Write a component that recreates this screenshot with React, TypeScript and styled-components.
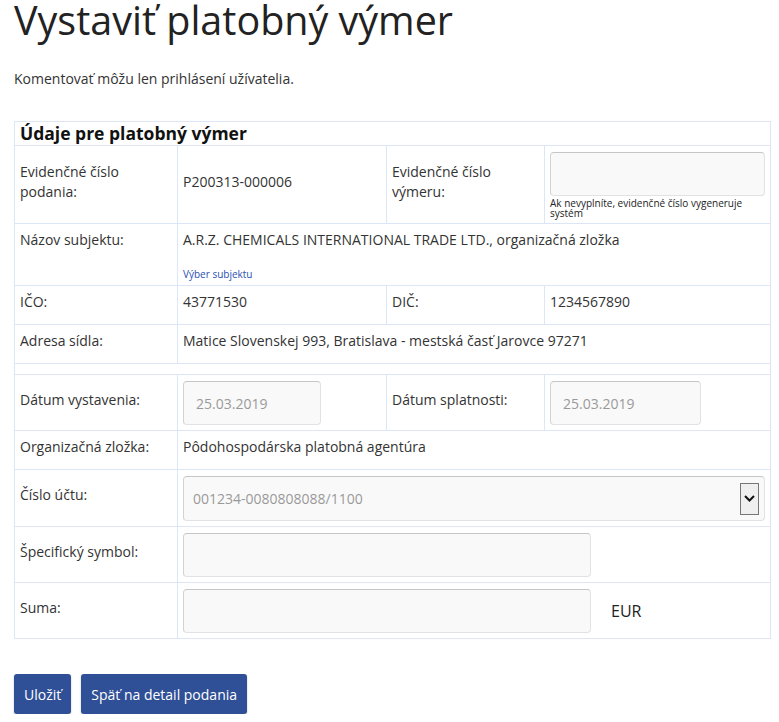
import React from 'react'
import styled, { createGlobalStyle } from 'styled-components'

const GlobalStyle = createGlobalStyle`
	body {
		margin: 0;
		background: #fff;
		font-family: 'Open Sans', 'Liberation Sans', sans-serif;
		font-size: 14px;
		color: #333;
	}
`

const Page = styled.div`
	padding: 0 9px 0 14px;
`

const Title = styled.h1`
	margin: 0;
	font-size: 39.5px;
	line-height: 40px;
	font-weight: 400;
	color: #222;
`

const Note = styled.p`
	margin: 29px 0 32px;
	line-height: 20px;
`

const Table = styled.table`
	width: 756px;
	border-collapse: collapse;
	table-layout: fixed;
`

const HeadCell = styled.th`
	border: 1px solid #dde6f7;
	padding: 0 5px;
	height: 23px;
	line-height: 23px;
	font-size: 17.5px;
	font-weight: 700;
	color: #111;
	text-align: left;
`

const Cell = styled.td<{ $top?: boolean }>`
	border: 1px solid #dde6f7;
	padding: 6px 5px 5px 5px;
	vertical-align: ${(p) => (p.$top ? 'top' : 'middle')};
`

const SpacerCell = styled.td`
	border: 1px solid #dde6f7;
	padding: 0;
	height: 10px;
`

const Text = styled.div<{ $tight?: boolean }>`
	line-height: 20px;
	padding-bottom: ${(p) => (p.$tight ? 0 : 7)}px;
`

const Input = styled.div<{ $w?: number }>`
	box-sizing: border-box;
	width: ${(p) => (p.$w ? `${p.$w}px` : '100%')};
	height: 44px;
	padding: 0 12px;
	display: flex;
	align-items: center;
	background: #f9f9f9;
	border: 1px solid #e2e2e2;
	border-top-color: #c6c6c6;
	border-left-color: #d2d2d2;
	border-radius: 4px;
	color: #999;
`

const Select = styled(Input)`
	height: 45px;
	padding: 0 5px 0 9px;
	justify-content: space-between;
`

const Arrow = styled.span`
	box-sizing: border-box;
	width: 19px;
	height: 32px;
	display: flex;
	align-items: center;
	justify-content: center;
	background: #efefef;
	border: 1px solid #767676;
`

const Hint = styled.div`
	margin-top: 2px;
	font-size: 10px;
	line-height: 10px;
	color: #222;
`

const SubjectLink = styled.a`
	display: block;
	margin-top: 18px;
	font-size: 10px;
	line-height: 12px;
	color: #2b4fb0;
	text-decoration: none;
`

const InputRow = styled.div`
	display: flex;
	align-items: center;
	gap: 20px;
`

const Currency = styled.span`
	font-size: 16px;
	color: #222;
`

const Actions = styled.div`
	display: flex;
	gap: 10px;
	margin-top: 35px;
`

const Button = styled.button`
	height: 40px;
	padding: 0 10px;
	border: none;
	border-radius: 3px;
	background: #2f4f96;
	color: #fff;
	font-family: inherit;
	font-size: 14px;
	box-shadow: 0 1px 2px rgba(0, 0, 0, 0.25);
`

const App: React.FC = () => {
	return (
		<Page>
			<GlobalStyle />
			<Title>Vystaviť platobný výmer</Title>
			<Note>Komentovať môžu len prihlásení užívatelia.</Note>
			<Table>
				<colgroup>
					<col style={{ width: 163 }} />
					<col style={{ width: 209 }} />
					<col style={{ width: 158 }} />
					<col style={{ width: 226 }} />
				</colgroup>
				<tbody>
					<tr>
						<HeadCell colSpan={4}>Údaje pre platobný výmer</HeadCell>
					</tr>
					<tr>
						<Cell><Text>Evidenčné číslo podania:</Text></Cell>
						<Cell><Text>P200313-000006</Text></Cell>
						<Cell><Text>Evidenčné číslo výmeru:</Text></Cell>
						<Cell>
							<Input />
							<Hint>Ak nevyplníte, evidenčné číslo vygeneruje systém</Hint>
						</Cell>
					</tr>
					<tr>
						<Cell $top><Text>Názov subjektu:</Text></Cell>
						<Cell $top colSpan={3}>
							<Text $tight>A.R.Z. CHEMICALS INTERNATIONAL TRADE LTD., organizačná zložka</Text>
							<SubjectLink href="#">Výber subjektu</SubjectLink>
						</Cell>
					</tr>
					<tr>
						<Cell><Text>IČO:</Text></Cell>
						<Cell><Text>43771530</Text></Cell>
						<Cell><Text>DIČ:</Text></Cell>
						<Cell><Text>1234567890</Text></Cell>
					</tr>
					<tr>
						<Cell><Text>Adresa sídla:</Text></Cell>
						<Cell colSpan={3}><Text>Matice Slovenskej 993, Bratislava - mestská časť Jarovce 97271</Text></Cell>
					</tr>
					<tr>
						<SpacerCell colSpan={4} />
					</tr>
					<tr>
						<Cell><Text>Dátum vystavenia:</Text></Cell>
						<Cell><Input $w={138}>25.03.2019</Input></Cell>
						<Cell><Text>Dátum splatnosti:</Text></Cell>
						<Cell><Input $w={151}>25.03.2019</Input></Cell>
					</tr>
					<tr>
						<Cell><Text>Organizačná zložka:</Text></Cell>
						<Cell colSpan={3}><Text>Pôdohospodárska platobná agentúra</Text></Cell>
					</tr>
					<tr>
						<Cell><Text>Číslo účtu:</Text></Cell>
						<Cell colSpan={3}>
							<Select>
								<span>001234-0080808088/1100</span>
								<Arrow>
									<svg width="11" height="7" viewBox="0 0 11 7">
										<path d="M1 1l4.5 4.5L10 1" fill="none" stroke="#111" strokeWidth="2" />
									</svg>
								</Arrow>
							</Select>
						</Cell>
					</tr>
					<tr>
						<Cell><Text>Špecifický symbol:</Text></Cell>
						<Cell colSpan={3}><Input $w={408} /></Cell>
					</tr>
					<tr>
						<Cell><Text>Suma:</Text></Cell>
						<Cell colSpan={3}>
							<InputRow>
								<Input $w={408} />
								<Currency>EUR</Currency>
							</InputRow>
						</Cell>
					</tr>
				</tbody>
			</Table>
			<Actions>
				<Button>Uložiť</Button>
				<Button>Späť na detail podania</Button>
			</Actions>
		</Page>
	)
}

export default App
